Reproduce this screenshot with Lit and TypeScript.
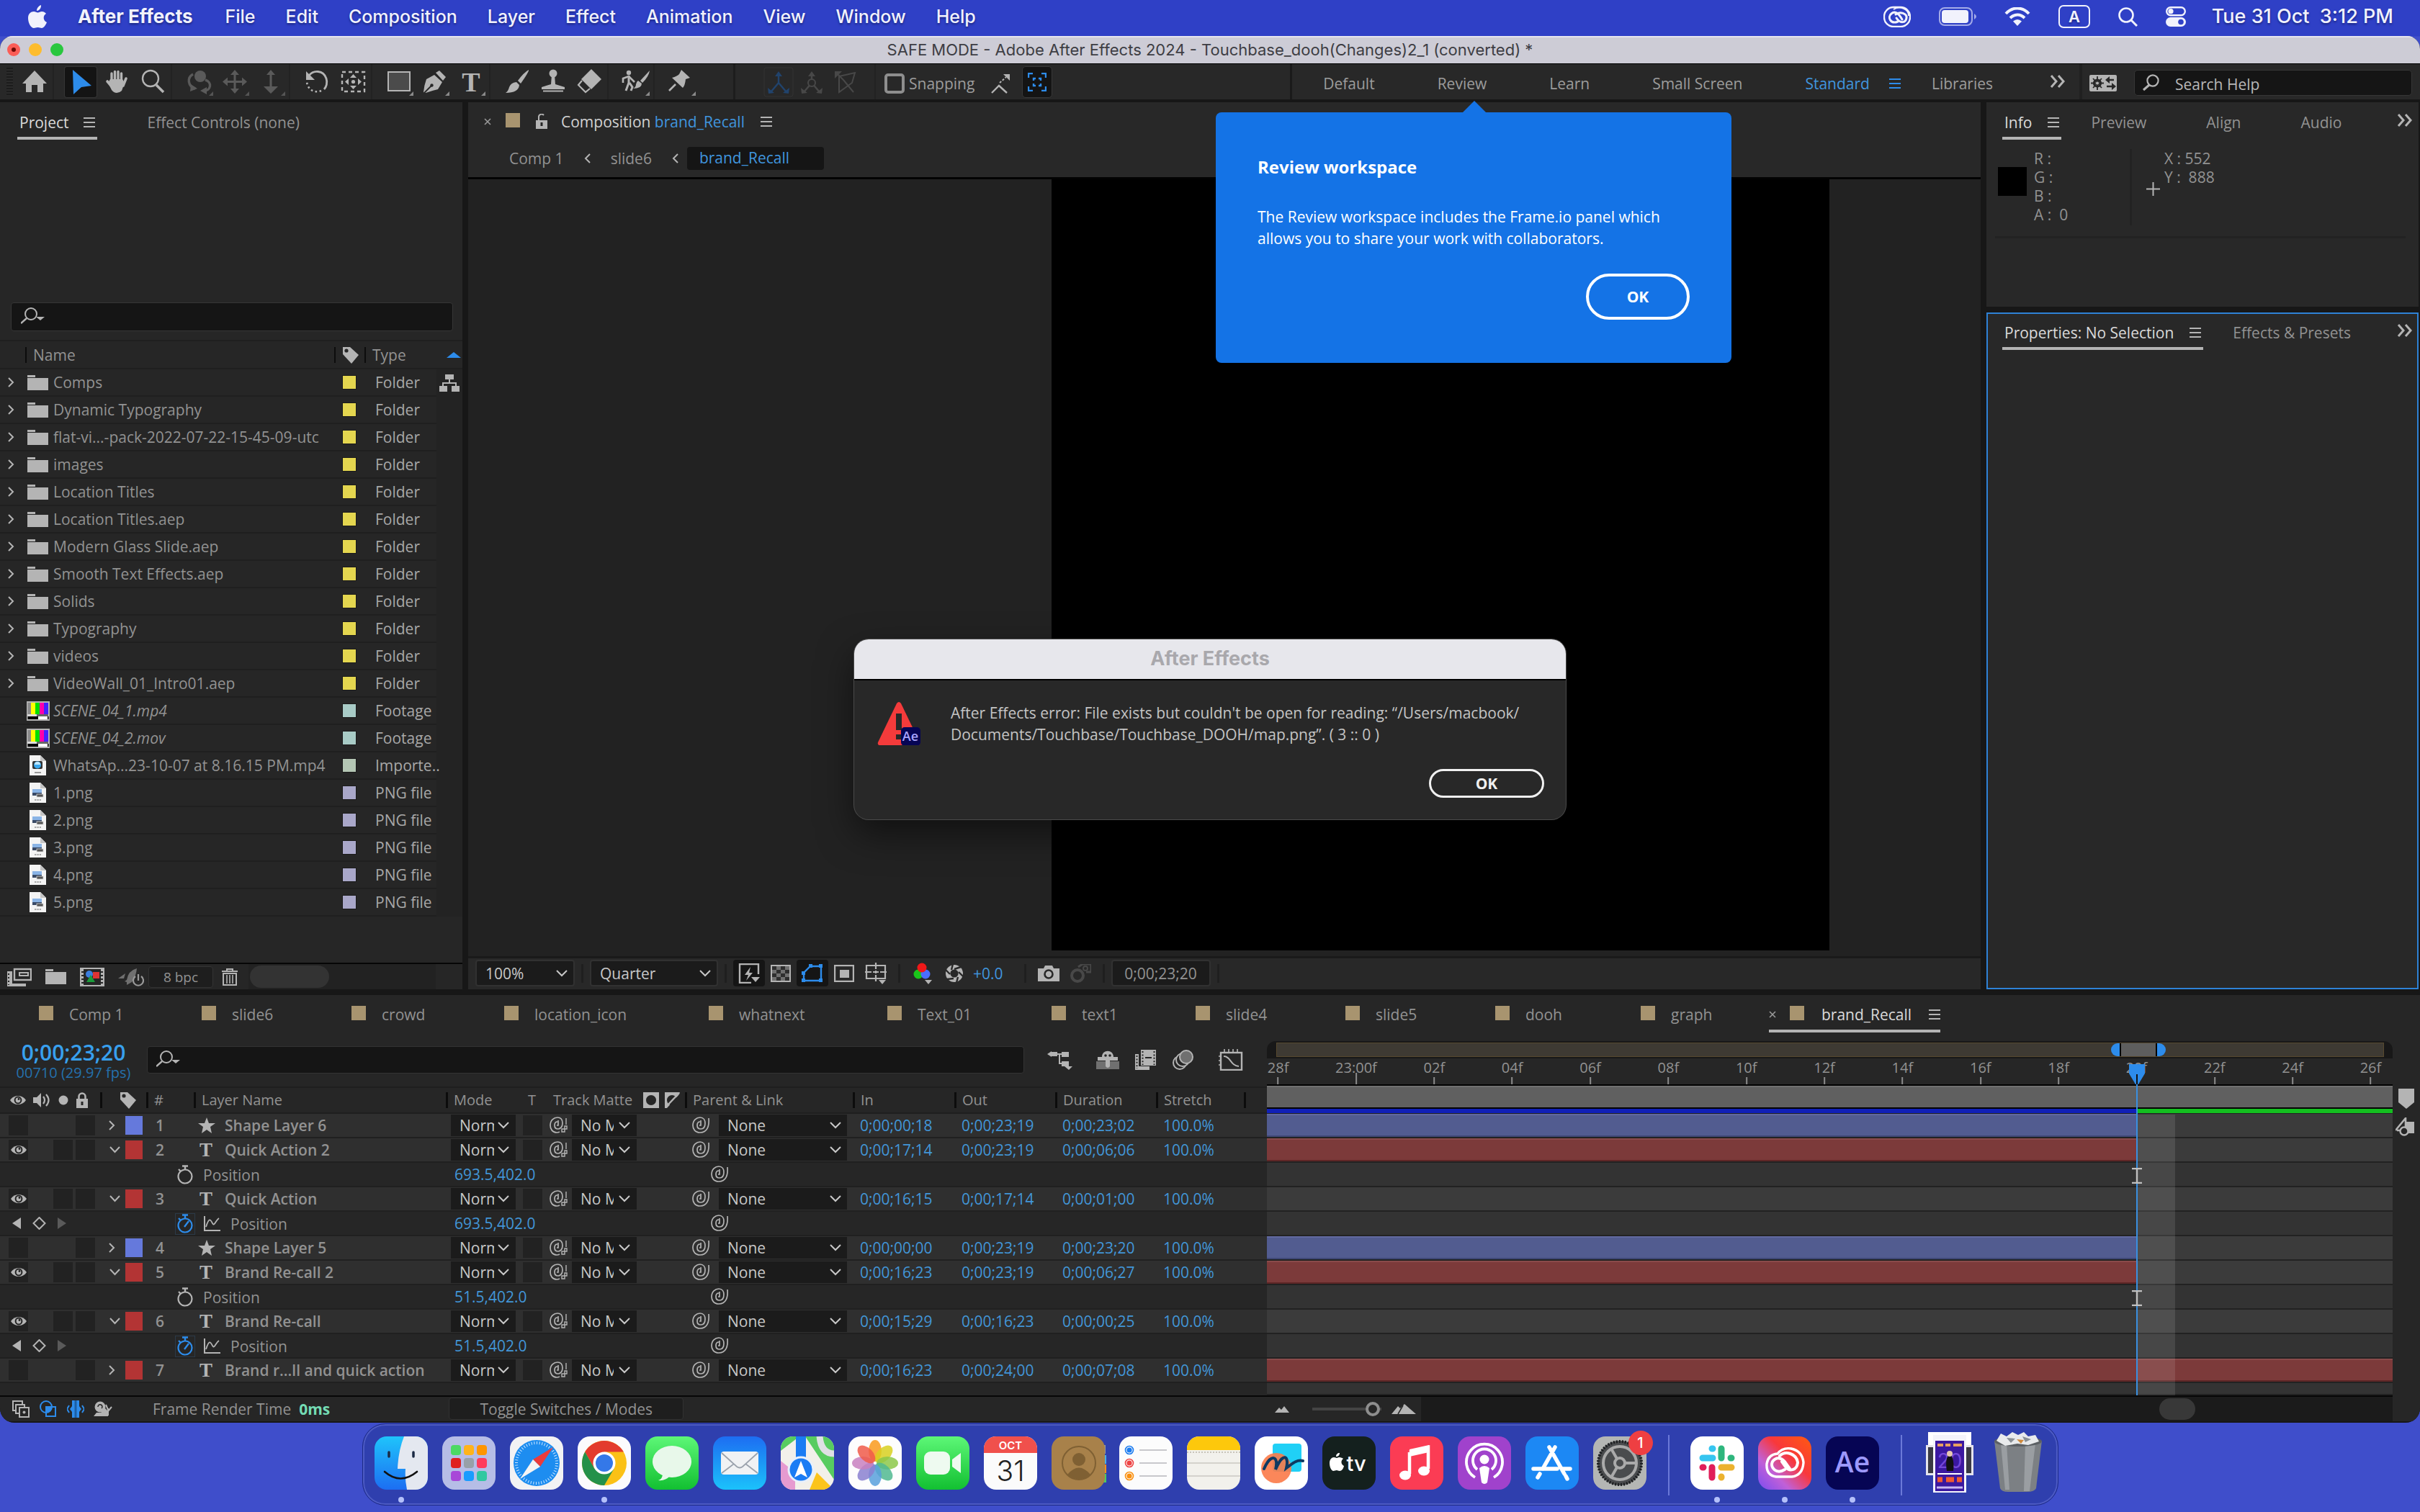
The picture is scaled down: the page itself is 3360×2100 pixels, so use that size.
import { LitElement, html, svg, css, nothing, TemplateResult } from "lit";
import { customElement } from "lit/decorators.js";
import { classMap } from "lit/directives/class-map.js";
import { styleMap } from "lit/directives/style-map.js";

type Art = unknown;

/** Wraps vector content in a sized svg element. */
const pic = (w: number, h: number, art: Art) =>
  html`<svg class="pic" width=${w} height=${h} viewBox=${`0 0 ${w} ${h}`} fill="none" aria-hidden="true">${art}</svg>`;

const G = "#b4b4b4";
const BLUE = "#2d8ceb";

const chevDown = pic(16, 10, svg`<path d="M1 1 8 8 15 1" stroke="#c8c8c8" stroke-width="2"/>`);
const chevRight = (c = "#b4b4b4") => pic(10, 14, svg`<path d="M2 1 8 7 2 13" stroke=${c} stroke-width="2"/>`);
const burger = (c = G) => pic(16, 16, svg`<path d="M0 2H16M0 8H16M0 14H16" stroke=${c} stroke-width="2"/>`);
const raquo = pic(22, 18, svg`<path d="M2 1 9 9 2 17M12 1 19 9 12 17" stroke="#b4b4b4" stroke-width="3"/>`);
const cross = pic(10, 10, svg`<path d="M1 1 9 9M9 1 1 9" stroke="#9a9a9a" stroke-width="1.6"/>`);
const lens = pic(34, 26, svg`<circle cx="14" cy="9" r="8" stroke=${G} stroke-width="2"/><path d="M8 15 0 22" stroke=${G} stroke-width="2.4"/><path d="M21 13H33L27 18Z" fill=${G}/>`);
const tag = pic(26, 26, svg`<path d="M3 2H13L25 13 15 25 3 12Z" fill=${G}/><circle cx="8" cy="7" r="2.6" fill="#262626"/>`);
const folder = pic(29, 21, svg`<path d="M0 3V0H11V3ZM0 4H29V21H0Z" fill=${G}/>`);
const corner = svg`<path d="M45 37V43H39Z" fill="#8a8a8a"/>`;
const dimCorner = svg`<path d="M45 37V43H39Z" fill="#555"/>`;
const whip = pic(26, 26, svg`<path d="M24 3C25 14 22 23 12 23 5 23 2 18 2 13 2 6 7 2 12 2 17 2 19 6 19 10 19 15 17 18 13 18 9 18 8 16 8 13 8 10 9 8 12 8M13 6V13H11" stroke=${G} stroke-width="1.700"/>`);
const matteWhip = pic(26, 26, svg`<path d="M15 22C13 23 12 23 11 23 5 23 2 18 2 13 2 6 7 2 12 2 17 2 19 5 19 10 19 15 16 18 13 18 9 18 8 16 8 13 8 10 9 8 12 8M13 6V13H11" stroke=${G} stroke-width="1.700"/><path d="M24 3V12M18 18h4v4h-4zM22 14h3v4h-3z" stroke=${G} stroke-width="1.400"/>`);
const eye = pic(24, 16, svg`<path d="M1 8C6 0 18 0 23 8 18 16 6 16 1 8Z" fill=${G}/><circle cx="12" cy="8" r="5.4" fill="#222"/><circle cx="12" cy="8" r="3.4" fill=${G}/><circle cx="13" cy="6.5" r="1.4" fill="#222"/>`);
const lockShut = pic(20, 22, svg`<path d="M2 9H18V22H2Z" fill=${G}/><path d="M5.500 10V6a4.500 4.500 0 0 1 9 0V10" stroke=${G} stroke-width="2.6"/><path d="M10 13v5" stroke="#262626" stroke-width="3"/>`);
const lockOpen = pic(18, 22, svg`<path d="M1 9H17V21H1Z" fill=${G}/><path d="M5 9V5a4 4 0 0 1 7-3" stroke=${G} stroke-width="2"/><path d="M9 12v5" stroke="#262626" stroke-width="3"/>`);
const star = pic(24, 22, svg`<path d="M12 0 15 8 24 8 17 13 19 22 12 17 5 22 7 13 0 8 9 8Z" fill=${G}/>`);
const stopwatch = (on: boolean) => {
  const c = on ? BLUE : G;
  return pic(26, 28, svg`<circle cx="13" cy="16" r="9.500" stroke=${c} stroke-width="2.200"/><path d="M9 1.500H17M13 2V6M4 6 7 9" stroke=${c} stroke-width="2.400"/>${on ? svg`<path d="M12 18 18 10" stroke=${c} stroke-width="2.400"/>` : nothing}`);
};
const graphIcon = pic(24, 22, svg`<path d="M2 0V20H24" stroke=${G} stroke-width="2"/><path d="M4 15C8 2 10 4 13 10 16 15 17 6 22 3" stroke=${G} stroke-width="1.800"/>`);

/* ---------- Toolbar art: every tool is drawn in a 50 x 48 cell ---------- */
const tool = {
  home: svg`<path d="M25 8 42 26H37V38H29V28H21V38H13V26H8Z" fill=${G}/>`,
  arrow: svg`<path d="M14 7 40 29 26 31 15 41Z" fill=${BLUE}/>`,
  hand: svg`<path d="M18 22V12M22.500 20V9.500M27 20V9.500M31.500 22V12" stroke=${G} stroke-width="3.400" stroke-linecap="round"/><path d="M38 19 34 29M12 23 18 30" stroke=${G} stroke-width="3.600" stroke-linecap="round"/><path d="M16 20H33L36 25 32 36Q29 39 25 39 21 39 18 35L13 25Z" fill=${G}/>`,
  zoom: svg`<circle cx="22" cy="19" r="11" stroke=${G} stroke-width="2.400"/><path d="M30 28 40 38" stroke=${G} stroke-width="3.600"/>`,
  orbit: svg`<circle cx="27" cy="16" r="8" fill="#5a5a5a"/><path d="M17 13C8 18 10 30 20 33M34 21C44 24 42 36 32 36" stroke="#5a5a5a" stroke-width="3.400"/><path d="M14 27 23 33 13 37ZM36 31 27 36 36 41Z" fill="#5a5a5a"/>${dimCorner}`,
  pan: svg`<path d="M25 12V35M12 23.500H38" stroke="#5a5a5a" stroke-width="3"/><path d="M25 7 31 14H19ZM25 40 31 33H19ZM8 23.500 15 17.500V29.500ZM42 23.500 35 17.500V29.500Z" fill="#5a5a5a"/>${dimCorner}`,
  dolly: svg`<path d="M25 12V32" stroke="#5a5a5a" stroke-width="3"/><path d="M25 7 31 14H19ZM25 40 35 30H15Z" fill="#5a5a5a"/>${dimCorner}`,
  rotate: svg`<path d="M14 15C20 7 34 7 38 19 40 25 38 31 35 34" stroke=${G} stroke-width="2.800"/><path d="M10 9V21H22Z" fill=${G}/><path d="M31 36C24 39 13 37 11 24" stroke=${G} stroke-width="2.600" stroke-dasharray="2.600 3.400"/>`,
  anchor: svg`<rect x="10" y="10" width="31" height="27" stroke=${G} stroke-width="2.400" stroke-dasharray="5 4"/><path d="M25.500 13 30 18H21ZM25.500 34 30 29H21ZM14 23.500 19 19V28ZM37 23.500 32 19V28Z" fill=${G}/><circle cx="25.500" cy="23.500" r="2.600" fill=${G}/>`,
  rect: svg`<rect x="10" y="10" width="30" height="26" fill="#4b4b4b" stroke=${G} stroke-width="2"/>${corner}`,
  pen: svg`<path d="M31 8 40 17 36 22 26 11Z" fill=${G}/><path d="M24 14 35 24 29 34Q24 35 12 39L9 38Q10 28 13 20Z" fill=${G}/><path d="M10 39 20 29" stroke="#282828" stroke-width="1.800"/><circle cx="20.500" cy="28.500" r="2.200" fill="#282828"/>${corner}`,
  type: svg`<text x="25" y="37" text-anchor="middle" class="ttool">T</text>${corner}`,
  brush: svg`<path d="M41 7Q42 9 30 26L26 22Q34 11 41 7Z" fill=${G}/><path d="M24 24 28 28Q27 39 9 39 13 36 14 31 16 25 24 24Z" fill=${G}/>`,
  stamp: svg`<circle cx="25" cy="12" r="5.500" fill=${G}/><path d="M23 14H27L28 27 41 31V34H9V31L22 27ZM11 35.500H39V37.500H11Z" fill=${G}/>`,
  eraser: svg`<path d="M28 6 42 20 28 34 14 20Z" fill=${G}/><path d="M15 22 10 28 20 38 26 33" stroke=${G} stroke-width="2.200"/>`,
  roto: svg`<circle cx="16" cy="11" r="3.200" fill=${G}/><path d="M16 15V25L12 36M17 25 21 31 19 36" stroke=${G} stroke-width="3"/><path d="M8 25V19L16 16 24 24" stroke=${G} stroke-width="2.600"/><path d="M45 8 32 22 35 25Q44 16 45 8Z" fill=${G}/><path d="M29 22 34 26Q34 33 22 33 26 31 26 27 27 23 29 22Z" fill=${G}/>${corner}`,
  pin: svg`<path d="M25 7 37 18 31 20Q30 29 27 32L12 18Q19 16 22 13Z" fill=${G}/><path d="M17 27 8 36" stroke=${G} stroke-width="2.600"/>${corner}`,
};

const axis = (c: string) => svg`<path d="M22 12V24L11 37M22 24 33 37" stroke=${c} stroke-width="2.400"/><path d="M22 8 27 15H17ZM7 31 8 39 16 38ZM37 31 36 39 28 38Z" fill=${c}/>`;

interface FileRow { name: string; kind: "folder" | "bars" | "mp4" | "png"; color: string; type: string }
const F = (name: string): FileRow => ({ name, kind: "folder", color: "#e4d64f", type: "Folder" });
const P = (name: string): FileRow => ({ name, kind: "png", color: "#a9a7c9", type: "PNG file" });
const FILES: FileRow[] = [
  F("Comps"), F("Dynamic Typography"), F("flat-vi...-pack-2022-07-22-15-45-09-utc"), F("images"),
  F("Location Titles"), F("Location Titles.aep"), F("Modern Glass Slide.aep"), F("Smooth Text Effects.aep"),
  F("Solids"), F("Typography"), F("videos"), F("VideoWall_01_Intro01.aep"),
  { name: "SCENE_04_1.mp4", kind: "bars", color: "#a8cbc6", type: "Footage" },
  { name: "SCENE_04_2.mov", kind: "bars", color: "#a8cbc6", type: "Footage" },
  { name: "WhatsAp...23-10-07 at 8.16.15 PM.mp4", kind: "mp4", color: "#b4c6b4", type: "Importe.." },
  P("1.png"), P("2.png"), P("3.png"), P("4.png"), P("5.png"),
];

const fileArt = (k: FileRow["kind"]): TemplateResult => {
  if (k === "folder") return folder;
  if (k === "bars")
    return pic(32, 27, svg`<rect width="32" height="27" fill="#b4b4b4"/><rect x="1.500" y="2" width="5" height="16" fill="#8a8a8a"/><rect x="6" y="2" width="6" height="16" fill="#ff0"/><rect x="12" y="2" width="6" height="16" fill="#0d0"/><rect x="18" y="2" width="6" height="16" fill="#f0a"/><rect x="24" y="2" width="6" height="16" fill="#42f"/><rect x="1.500" y="18" width="29" height="3" fill="#ddd"/><rect x="14" y="18" width="16" height="3" fill="#666"/><rect x="1.500" y="21" width="29" height="4" fill="#000"/><rect x="16" y="21" width="13" height="4" fill="#fff"/>`);
  return pic(23, 28, svg`<path d="M0 0H15L23 8V28H0Z" fill="#f4f4f4"/><path d="M15 0V8H23Z" fill="#c4c4c4"/>${
    k === "mp4"
      ? svg`<rect x="4" y="8" width="14" height="11" rx="2" fill="#333"/><circle cx="11" cy="13.500" r="5" fill="#3aa8ee"/><path d="M7 13a4 4 0 0 1 8 0" fill="#bfe6fb"/><path d="M7 24H16" stroke="#999" stroke-width="2"/>`
      : svg`<rect x="4" y="9" width="13" height="9" fill="#8ab4e6"/><rect x="4" y="14" width="13" height="4" fill="#3a4a66"/><rect x="10" y="16" width="9" height="4" fill="#555" stroke="#ddd" stroke-width=".8"/><path d="M7 24H16" stroke="#aaa" stroke-width="2" stroke-dasharray="2.400 1"/>`
  }`);
};
const FILE_COLS = [35, 429, 42, 100, 36];

interface Layer {
  n: number; name: string; shape?: boolean; on: boolean; open: boolean;
  io: [string, string, string]; end: number;
  prop?: { value: string; keyed: boolean };
}
/* `end` is the last visible frame of the bar inside the zoomed range, 0 when out of range. */
const LAYERS: Layer[] = [
  { n: 1, name: "Shape Layer 6", shape: true, on: false, open: false, io: ["0;00;00;18", "0;00;23;19", "0;00;23;02"], end: 22 },
  { n: 2, name: "Quick Action 2", on: true, open: true, io: ["0;00;17;14", "0;00;23;19", "0;00;06;06"], end: 22, prop: { value: "693.5,402.0", keyed: false } },
  { n: 3, name: "Quick Action", on: true, open: true, io: ["0;00;16;15", "0;00;17;14", "0;00;01;00"], end: 0, prop: { value: "693.5,402.0", keyed: true } },
  { n: 4, name: "Shape Layer 5", shape: true, on: false, open: false, io: ["0;00;00;00", "0;00;23;19", "0;00;23;20"], end: 22 },
  { n: 5, name: "Brand Re-call 2", on: true, open: true, io: ["0;00;16;23", "0;00;23;19", "0;00;06;27"], end: 22, prop: { value: "51.5,402.0", keyed: false } },
  { n: 6, name: "Brand Re-call", on: true, open: true, io: ["0;00;15;29", "0;00;16;23", "0;00;00;25"], end: 0, prop: { value: "51.5,402.0", keyed: true } },
  { n: 7, name: "Brand r...ll and quick action", on: false, open: false, io: ["0;00;16;23", "0;00;24;00", "0;00;07;08"], end: 30 },
];
const LAYER_COLS = [139, 64, 66, 350, 103, 35, 194, 233, 141, 140, 140, 122, 32];

const TICKS = ["28f", "23:00f", "02f", "04f", "06f", "08f", "10f", "12f", "14f", "16f", "18f", "20f", "22f", "24f", "26f"];
const at = (frame: number) => `${Math.min(100, 1 + frame * 3.466)}%`;

const COMPS: string[] = ["Comp 1", "slide6", "crowd", "location_icon", "whatnext", "Text_01", "text1", "slide4", "slide5", "dooh", "graph"];

const base = css`
  * { box-sizing: border-box; }
  button, input, select { font: inherit; color: inherit; background: none; border: 0; margin: 0; padding: 0; border-radius: 0; outline: 0; }
  button { display: inline-flex; align-items: center; cursor: default; }
  select { appearance: none; }
  a { color: inherit; text-decoration: none; }
  .pic { display: block; flex: none; }
  .pick { display: inline-grid; align-items: center; background: #1b1b1b; color: #c8c8c8; }
  .pick > * { grid-area: 1 / 1; min-width: 0; }
  .pick .pic { justify-self: end; margin-right: 8px; pointer-events: none; }
`;

/* ------------------------------------------------------------------ */
@customElement("mac-menubar")
class MacMenubar extends LitElement {
  static styles = [base, css`
    :host { display: flex; align-items: center; justify-content: space-between; height: 50px; padding: 0 37px 4px 38px; color: #f1f2fc; font: 500 25px/46px Inter, "Liberation Sans", sans-serif; text-shadow: 0 2px 3px #1a2580; }
    nav, .status { display: flex; align-items: center; gap: 42px; }
    .app { font-weight: 700; font-size: 26px; margin-right: 3px; }
    .status { gap: 36px; }
    .clock { white-space: pre; font-size: 27px; }
    .stat { display: flex; align-items: center; gap: 39px; }
    .source text { font: 600 22px Inter, sans-serif; }
  `];
  render() {
    return html`<nav>
        ${pic(28, 34, svg`<path d="M19 2C19 6 16 9 13 9 13 5 16 2 19 1ZM20 10C23 10 25 11.500 26 13 21 16 22 23 27 25 25 30 22 33 20 33 18 33 17 32 14.500 32 12 32 11 33 9 33 5 33 1 26 1 19 1 13 5 10 9 10 11 10 13 11.500 14.500 11.500 16 11.500 18 10 20 10Z" fill="#f1f2fc"/>`)}
        <a href="#" class="app">After Effects</a>
        ${["File", "Edit", "Composition", "Layer", "Effect", "Animation", "View", "Window", "Help"].map((t) => html`<a href="#">${t}</a>`)}
      </nav>
      <div class="status">
        <div class="stat">
          ${pic(38, 30, svg`<rect x="1" y="2" width="36" height="27" rx="13" stroke="#f1f2fc" stroke-width="2.400"/><path d="M14 5A13 11 0 0 1 35 14" stroke="#f1f2fc" stroke-width="2"/><path d="M20 22C10 26 5 16 11 11 17 6 22 12 26 19M17 12C23 7 33 11 32 17 31 24 23 25 18 17" stroke="#f1f2fc" stroke-width="3" stroke-linecap="round"/>`)}
          ${pic(52, 26, svg`<rect x="1" y="1" width="45" height="24" rx="7" stroke="#a4abe8" stroke-width="2"/><rect x="4" y="4" width="37" height="18" rx="4" fill="#f1f2fc"/><path d="M49 9V17Q52 15 52 13 52 11 49 9Z" fill="#a4abe8"/>`)}
          ${pic(36, 26, svg`<path d="M2 9C11-1 25-1 34 9M8 15C14 9 22 9 28 15" stroke="#f1f2fc" stroke-width="4"/><path d="M12 19.500Q18 14.500 24 19.500L18 26Z" fill="#f1f2fc"/>`)}
          <span class="source">${pic(44, 32, svg`<rect x="1" y="1" width="42" height="30" rx="6" stroke="#f1f2fc" stroke-width="2"/><text x="22" y="24" text-anchor="middle" fill="#f1f2fc">A</text>`)}</span>
          ${pic(27, 27, svg`<circle cx="11" cy="11" r="9.500" stroke="#f1f2fc" stroke-width="2.600"/><path d="M18 18 26 26" stroke="#f1f2fc" stroke-width="3"/>`)}
          ${pic(28, 28, svg`<rect x="1.200" y="1.200" width="25.600" height="11" rx="5.500" stroke="#f1f2fc" stroke-width="2.400"/><circle cx="7" cy="6.700" r="3.600" fill="#f1f2fc"/><rect y="15" width="28" height="13" rx="6.500" fill="#f1f2fc"/><circle cx="21" cy="21.500" r="3.800" fill="#3142c8"/>`)}
        </div>
        <time class="clock">Tue 31 Oct  3:12 PM</time>
      </div>`;
  }
}

/* ------------------------------------------------------------------ */
@customElement("ae-toolbar")
class AeToolbar extends LitElement {
  static styles = [base, css`
    :host { display: flex; align-items: stretch; height: 49px; background: #282828; color: #9c9c9c; }
    .grip { width: 9px; margin: 5px 5px 5px 9px; background: repeating-linear-gradient(#1c1c1c 0 2px, #2b2b2b 2px 4px); }
    .set { display: flex; align-items: center; }
    .set + .set { border-left: 2px solid #222; padding-left: 12px; }
    .cell { width: 50px; height: 48px; justify-content: center; }
    .cell.on { background: #141414; box-shadow: inset 0 0 0 2px #282828, inset 0 0 0 3px #353535; border-radius: 6px; }
    .ttool { font: 700 38px "Liberation Serif", serif; fill: #b4b4b4; }
    .set.axes { margin-left: 47px; border-left: 3px solid #1d1d1d; padding-left: 38px; }
    .axes .cell { width: 44px; margin-right: 2px; }
    .snap { gap: 6px; margin-left: 17px; }
    .snap label { padding-top: 5px; line-height: 32px; }
    input[type="checkbox"] { appearance: none; width: 28px; height: 28px; border: 4px solid #8e8e8e; border-radius: 5px; margin-top: 4px; }
    .fit { width: 42px; height: 44px; background: #141414; border: 1px solid #383838; border-radius: 5px; justify-content: center; margin-left: 8px; }
    .spaces { display: flex; align-items: center; padding-top: 5px; border-left: 3px solid #1a1a1a; padding-left: 43px; margin-left: auto; gap: 87px; }
    .spaces .now { color: #4095df; display: flex; align-items: center; gap: 27px; margin-right: -44px; }
    .spaces .more { margin: -6px 0 0 -8px; }
    .help { display: flex; align-items: center; gap: 24px; border-left: 4px solid #202020; padding: 3px 11px 0 10px; margin-left: 19px; }
    .find { display: flex; align-items: center; gap: 20px; width: 386px; height: 36px; padding: 0 10px; background: #151515; border: 1px solid #363636; border-radius: 5px; }
    .find input { width: 100%; padding-top: 4px; color: #b4b4b4; }
    .find input::placeholder { color: #b8b8b8; opacity: 1; }
  `];
  private cells(names: (keyof typeof tool)[], on = "") {
    return html`<div class="set">${names.map((k) => html`<button class=${classMap({ cell: true, on: k === on })} aria-label=${k}>${pic(50, 48, tool[k])}</button>`)}</div>`;
  }
  render() {
    return html`<div class="grip"></div>
      ${this.cells(["home"])}${this.cells(["arrow", "hand", "zoom"], "arrow")}${this.cells(["orbit", "pan", "dolly"])}
      ${this.cells(["rotate", "anchor"])}${this.cells(["rect", "pen", "type"])}${this.cells(["brush", "stamp", "eraser"])}
      ${this.cells(["roto"])}${this.cells(["pin"])}
      <div class="set axes">
        <button class="cell" aria-label="local axis">${pic(44, 46, svg`<rect x="2" y="3" width="40" height="40" rx="3" stroke="#333"/>${axis("#21436c")}`)}</button>
        <button class="cell" aria-label="world axis">${pic(44, 46, svg`${axis("#484848")}<circle cx="22" cy="24" r="5" stroke="#484848" stroke-width="2" fill="#282828"/>`)}</button>
        <button class="cell" aria-label="view axis">${pic(44, 46, svg`<path d="M14 15V37L32 24 36 10ZM20 20 34 37M12 12 20 20" stroke="#484848" stroke-width="2"/><path d="M8 8H18L8 18Z" fill="#484848"/>`)}</button>
      </div>
      <div class="set snap">
        <input type="checkbox" id="snap" /><label for="snap">Snapping</label>
        <button aria-label="snap edges">${pic(46, 40, svg`<path d="M18 35 28 25 39 35" stroke="#b4b4b4" stroke-width="2.400"/><path d="M29 21 38 13" stroke="#b4b4b4" stroke-width="2" stroke-dasharray="3 2"/><path d="M34 9H43V18Z" fill="#b4b4b4"/>`)}</button>
        <button class="fit" aria-label="snap bounds">${pic(26, 26, svg`<path d="M1 7V1H7M19 1H25V7M25 19V25H19M7 25H1V19M8 11V8H11M15 8H18V11M18 15V18H15M11 18H8V15" stroke="#2d8ceb" stroke-width="2.400"/>`)}</button>
      </div>
      <nav class="spaces">
        <a href="#">Default</a><a href="#">Review</a><a href="#">Learn</a><a href="#">Small Screen</a>
        <a href="#" class="now">Standard ${burger(BLUE)}</a><a href="#">Libraries</a><button class="more" aria-label="more">${raquo}</button>
      </nav>
      <div class="help">
        ${pic(38, 23, svg`<rect width="38" height="23" rx="2" fill="#b4b4b4"/><circle cx="11" cy="11.500" r="4.600" stroke="#282828" stroke-width="3"/><path d="M11 2V21M2 11.500H20M5 5 17 18M17 5 5 18" stroke="#282828" stroke-width="1.800"/><circle cx="11" cy="11.500" r="2" fill="#b4b4b4"/><path d="M24 7H34M24 16H34" stroke="#282828" stroke-width="2.600"/><path d="M28 2V12L22 7ZM31 11V21L37 16Z" fill="#282828"/>`)}
        <label class="find">${pic(26, 24, svg`<circle cx="15" cy="9" r="7.600" stroke="#b4b4b4" stroke-width="2.200"/><path d="M10 15 2 22" stroke="#b4b4b4" stroke-width="3"/>`)}<input placeholder="Search Help" aria-label="Search Help" /></label>
      </div>`;
  }
}

/* ------------------------------------------------------------------ */
const tabsCss = css`
  .tabs { display: flex; align-items: flex-start; height: 52px; white-space: nowrap; }
  .tab { display: flex; align-items: center; gap: 22px; height: 52px; padding: 7px 3px 4px; line-height: 32px; color: #929292; }
  .tab.on { color: #dadada; border-bottom: 4px solid #b4b4b4; padding-bottom: 0; }
`;

@customElement("ae-project")
class AeProject extends LitElement {
  static styles = [base, tabsCss, css`
    :host { display: flex; flex-direction: column; background: #262626; color: #929292; }
    .tabs { padding-left: 24px; gap: 67px; margin-bottom: 226px; }
    .tabs .tab.on { gap: 20px; }
    .find { display: flex; align-items: center; height: 40px; margin: 0 13px 12px 15px; padding: 0 13px; background: #151515; border: 1px solid #363636; border-radius: 4px; }
    .find input { flex: 1; }
    table { table-layout: fixed; border-collapse: separate; border-spacing: 0; width: 642px; text-align: left; }
    td, th { padding: 0; font-weight: 400; height: 38px; line-height: 36px; border-bottom: 2px solid #1f1f1f; white-space: nowrap; }
    th { height: 41px; border-top: 2px solid #1f1f1f; background: linear-gradient(#0c0c0c, #0c0c0c) left 0 center / 2px 22px no-repeat; padding-left: 11px; }
    th:first-child { background: none; }
    th .pic { margin-left: -2px; }
    td:last-child { background: #232323; border-bottom: 0; }
    .type { color: #a8a8a8; padding-left: 15px; }
    .chev { padding-left: 10px; }
    .name { display: flex; align-items: center; gap: 9px; height: 36px; }
    .icon { width: 33px; display: flex; justify-content: center; margin-left: 1px; }
    .name .icon { margin-right: -4px; }
    .ital { font-style: italic; }
    .chip { display: block; width: 20px; height: 20px; border: 1px solid #1a1a1a; margin-left: 11px; }
    .flow { padding-left: 4px; }
    th.tri { padding-left: 16px; background: none; }
    .rest { flex: 1; margin-right: 36px; }
    footer { display: flex; align-items: center; height: 37px; border-top: 2px solid #060606; padding-left: 10px; gap: 19px; }
    .bpc { width: 90px; height: 30px; justify-content: center; background: #1e1e1e; border: 1px solid #333; border-radius: 4px; font-size: 19px; margin: 0 -7px 0 -13px; }
    .scroll { width: 260px; height: 35px; background: #222; padding: 2px; margin-left: -4px; }
    .thumb { width: 110px; height: 31px; border-radius: 16px; background: #333; }
  `];
  render() {
    return html`<div class="tabs">
        <button class="tab on">Project ${burger()}</button><button class="tab">Effect Controls (none)</button>
      </div>
      <label class="find">${lens}<input aria-label="Search project" /></label>
      <table>
        <colgroup>${FILE_COLS.map((w) => html`<col style=${styleMap({ width: `${w}px` })} />`)}</colgroup>
        <thead><tr><th></th><th>Name</th><th>${tag}</th><th>Type</th>
          <th class="tri">${pic(20, 8, svg`<path d="M0 8 10 0 20 8Z" fill=${BLUE}/>`)}</th></tr></thead>
        <tbody>${FILES.map((f, i) => html`<tr>
          <td class="chev">${f.kind === "folder" ? chevRight() : nothing}</td>
          <td><div class="name"><span class="icon">${fileArt(f.kind)}</span><span class=${f.kind === "bars" ? "ital" : ""}>${f.name}</span></div></td>
          <td><span class="chip" style=${styleMap({ background: f.color })}></span></td>
          <td class="type">${f.type}</td>
          <td class="flow">${i === 0 ? pic(28, 24, svg`<path d="M8 0H20V7H8ZM0 16H11V24H0ZM17 16H28V24H17Z" fill=${G}/><path d="M14 7V12M5 16V12H23V16" stroke=${G} stroke-width="2"/>`) : nothing}</td>
        </tr>`)}</tbody>
      </table>
      <div class="rest"></div>
      <footer>
        ${pic(34, 26, svg`<path d="M0 5H7V22H26V26H0Z" fill=${G}/><path d="M2 8V24" stroke="#262626" stroke-width="2" stroke-dasharray="2 3"/><rect x="10" y="2" width="23" height="15" stroke=${G} stroke-width="2.400"/><rect x="17" y="7" width="12" height="4" stroke=${G} stroke-width="2"/>`)}
        ${folder}
        ${pic(34, 26, svg`<rect x="1" y="1" width="32" height="24" fill="#262626" stroke=${G} stroke-width="2"/><path d="M3 2V24M31 2V24" stroke=${G} stroke-width="4" stroke-dasharray="3 2"/><circle cx="13" cy="9" r="5" fill="#3b7ddd"/><path d="M18 6H27V15H18Z" fill="#d33"/><path d="M9 20 15 10 21 20Z" fill="#1a9c3a"/>`)}
        ${pic(36, 26, svg`<path d="M12 17Q14 4 26 1 25 12 19 20L12 24V20L9 19ZM0 15 10 8 8 15Z" fill="#707070"/><path d="M24 12A7 7 0 1 0 32 12M28 9V18" stroke="#9a9a9a" stroke-width="2.200"/>`)}
        <button class="bpc">8 bpc</button>
        ${pic(22, 24, svg`<path d="M0 4H22M7 4V1H15V4M2 7H20V23H2Z" stroke=${G} stroke-width="2"/><path d="M7 9V21M11 9V21M15 9V21" stroke=${G} stroke-width="1.600"/>`)}
        <div class="scroll"><div class="thumb"></div></div>
      </footer>`;
  }
}

/* ------------------------------------------------------------------ */
@customElement("ae-viewer")
class AeViewer extends LitElement {
  static styles = [base, tabsCss, css`
    :host { display: flex; flex-direction: column; background: #282828; color: #929292; }
    .head { display: flex; align-items: center; height: 52px; padding: 5px 0 3px 22px; line-height: 32px; color: #d2d2d2; }
    .head .chip { width: 20px; height: 20px; background: #a8946f; margin: 0 21px 4px 20px; }
    .head .title { margin: 0 22px 0 18px; }
    .blue { color: #4095df; }
    .crumbs { display: flex; align-items: center; height: 52px; padding: 0 0 0 57px; }
    .crumbs a { line-height: 32px; }
    .crumbs .pic { margin: 0 27px 0 28px; transform: scaleX(-1); }
    .crumbs .here { width: 190px; height: 32px; padding-left: 17px; background: #151515; border-radius: 4px; color: #4095df; margin-left: -16px; line-height: 30px; }
    .stage { flex: 1; background: #222; border-top: 3px solid #030303; border-bottom: 3px solid #1a1a1a; padding-bottom: 8px; }
    .canvas { width: 51.43%; height: 100%; margin-left: 38.57%; background: #000; }
    .bar { display: flex; align-items: center; height: 43px; padding: 0 0 2px 10px; }
    .bar .pick { height: 37px; background: #1b1b1b; border: 2px solid #313131; border-radius: 4px; }
    .pick select { padding-left: 12px; width: 100%; }
    .zoom { width: 138px; }
    .res { width: 178px; }
    .sep { width: 3px; height: 26px; background: #1f1f1f; margin: 0 9px; }
    .ic { width: 44px; height: 37px; justify-content: center; }
    .ic.dark { background: #151515; border-radius: 4px; }
    .bar .blue { margin-left: 4px; margin-right: 20px; }
    .tc { width: 138px; height: 37px; justify-content: center; background: #1b1b1b; border: 2px solid #313131; border-radius: 4px; }
  `];
  render() {
    const crumb = chevRight();
    const s = html`<span class="sep"></span>`;
    return html`<div class="head">${cross}<span class="chip"></span>${lockOpen}<span class="title">Composition <span class="blue">brand_Recall</span></span>${burger()}</div>
      <nav class="crumbs"><a href="#">Comp 1</a>${crumb}<a href="#">slide6</a>${crumb}<a href="#" class="here">brand_Recall</a></nav>
      <div class="stage"><div class="canvas"></div></div>
      <div class="bar">
        <label class="pick zoom"><select aria-label="Magnification"><option>100%</option></select>${chevDown}</label>${s}
        <label class="pick res"><select aria-label="Resolution"><option>Quarter</option></select>${chevDown}</label>${s}
        <button class="ic dark" aria-label="fast previews">${pic(30, 28, svg`<path d="M28 15V1H2V27H18" stroke=${G} stroke-width="2.400"/><path d="M17 5 9 16H14L11 24 20 13H15Z" fill=${G}/><path d="M18 19H30L24 26Z" fill=${G}/>`)}</button>
        <button class="ic" aria-label="transparency grid">${pic(28, 24, svg`<rect x="1" y="1" width="26" height="22" stroke=${G} stroke-width="2" fill="#707070"/><path d="M2 2h6v5H2zM14 2h6v5h-6zM8 7h6v5H8zM20 7h6v5h-6zM2 12h6v5H2zM14 12h6v5h-6zM8 17h6v5H8zM20 17h6v5h-6z" fill="#2e2e2e"/>`)}</button>
        <button class="ic dark" aria-label="mask visibility">${pic(30, 26, svg`<path d="M3 23V12L12 3H27V23Z" stroke=${BLUE} stroke-width="2.400"/><path d="M0 20h5v5H0zM24 20h5v5h-5zM24 0h5v5h-5zM10 0h5v5h-5zM0 10h5v5H0z" fill=${BLUE}/>`)}</button>
        <button class="ic" aria-label="region of interest">${pic(28, 24, svg`<rect x="1" y="1" width="26" height="22" stroke=${G} stroke-width="2.400"/><rect x="8" y="7" width="13" height="11" fill=${G}/>`)}</button>
        <button class="ic" aria-label="guides">${pic(30, 30, svg`<path d="M2 4H28V22H2ZM15 0V9M15 17V26M0 13H9M21 13H30M11 13H19M15 11V15" stroke=${G} stroke-width="2.200"/><path d="M19 24H29L24 30Z" fill=${G}/>`)}</button>${s}
        <button class="ic" aria-label="channels">${pic(26, 30, svg`<circle cx="7" cy="16" r="6.500" fill="#1ac41a"/><circle cx="17" cy="16" r="6.500" fill="#4a6dff"/><circle cx="12" cy="7" r="6.500" fill="#f01818"/><path d="M16 24H26L21 30Z" fill=${G}/>`)}</button>
        <button class="ic" aria-label="exposure reset">${pic(26, 26, svg`<circle cx="13" cy="13" r="12" fill=${G}/><path d="M13 7 22 4M19 11 26 18M18 18 16 26M12 20 3 21M7 14 1 8M9 8 11 0" stroke="#282828" stroke-width="2.400"/><circle cx="13" cy="13" r="5.600" fill="#282828"/>`)}</button>
        <span class="blue">+0.0</span>${s}
        <button class="ic" aria-label="snapshot">${pic(30, 22, svg`<path d="M0 4H8L10 0H20L22 4H30V22H0Z" fill=${G}/><circle cx="15" cy="12" r="5.500" stroke="#282828" stroke-width="2.600"/>`)}</button>
        <button class="ic" aria-label="show snapshot">${pic(30, 26, svg`<circle cx="11" cy="16" r="8" stroke="#484848" stroke-width="4"/><path d="M12 4 18 0H30V11H23" stroke="#484848" stroke-width="3"/><circle cx="22" cy="6" r="3" stroke="#484848" stroke-width="2"/>`)}</button>${s}
        <button class="tc">0;00;23;20</button>${s}
      </div>`;
  }
}

/* ------------------------------------------------------------------ */
@customElement("ae-side")
class AeSide extends LitElement {
  static styles = [base, tabsCss, css`
    :host { display: flex; flex-direction: column; gap: 8px; color: #929292; }
    section { background: #282828; }
    .info { height: 284px; padding-right: 18px; }
    .tabs { padding: 0 0 0 22px; }
    .tabs .more { margin: 16px 0 0 auto; }
    .info .tabs { margin-right: -10px; }
    .info .tab + .tab { margin-left: 38px; }
    .info .tab + .tab + .tab { margin-left: 77px; }
    .vals { display: grid; grid-template-columns: 40px 146px 18px 1fr; padding: 13px 0 0 16px; column-gap: 10px; line-height: 26px; height: 134px; }
    .well { background: #000; width: 40px; height: 40px; margin-top: 25px; }
    .vals div { white-space: pre; }
    .rgb { border-right: 3px solid #222; height: 106px; margin-right: 10px; }
    .plus { margin-top: 46px; }
    .xy { margin-left: -3px; }
    hr { border: 0; height: 3px; background: #222; margin: 0 0 0 12px; }
    .props { flex: 1; border: 2px solid #2e82d6; }
    .props .tabs { padding-left: 20px; padding-right: 6px; margin-top: -2px; }
    .props .tab + .tab { margin-left: 38px; }
  `];
  render() {
    return html`<section class="info">
        <div class="tabs"><button class="tab on">Info ${burger()}</button><button class="tab">Preview</button><button class="tab">Align</button><button class="tab">Audio</button><button class="more" aria-label="more">${raquo}</button></div>
        <div class="vals"><div class="well"></div><div class="rgb">R :
G :
B :
A :  0</div><div class="plus">${pic(19, 19, svg`<path d="M9.500 0V19M0 9.500H19" stroke=${G} stroke-width="2"/>`)}</div><div class="xy">X : 552
Y :  888</div></div>
        <hr />
      </section>
      <section class="props">
        <div class="tabs"><button class="tab on">Properties: No Selection ${burger()}</button><button class="tab">Effects &amp; Presets</button><button class="more" aria-label="more">${raquo}</button></div>
      </section>`;
  }
}

/* ------------------------------------------------------------------ */
@customElement("ae-timeline")
class AeTimeline extends LitElement {
  static styles = [base, tabsCss, css`
    :host { display: block; background: #262626; color: #929292; }
    .comps { display: grid; grid-template-columns: 226px 208px 212px 284px 248px 228px 200px 208px 208px 202px 178px auto; height: 64px; padding-left: 54px; justify-content: start; }
    .comp { display: flex; align-items: center; gap: 22px; height: 52px; line-height: 32px; padding: 6px 0 4px; }
    .comp::before { content: ""; width: 20px; height: 20px; background: #a8946f; margin-bottom: 4px; }
    .comp.on { color: #dadada; border-bottom: 4px solid #b4b4b4; padding-bottom: 0; gap: 24px; }
    .comp.on::before { order: 1; }
    .comp.on .pic:first-child { margin-right: -5px; }
    .comp.on > :nth-child(n + 2) { order: 2; }
    .body { display: grid; grid-template-columns: 1759px 1fr 38px; }
    .tools { display: flex; align-items: center; height: 63px; padding-bottom: 12px; }
    .clock { width: 204px; text-align: center; padding-top: 4px; }
    .clock b { display: block; font-size: 30px; line-height: 32px; font-weight: 600; color: #38a0ee; }
    .clock span { display: block; font-size: 20px; line-height: 24px; color: #2571ad; }
    .find { display: flex; align-items: center; width: 1218px; height: 38px; padding: 0 12px; background: #151515; border: 1px solid #333; border-radius: 4px; }
    .find input { flex: 1; }
    .tools .acts { display: flex; align-items: center; margin-left: 32px; }
    .acts button + button { margin-left: 22px; }
    .acts button:nth-child(2) { margin-left: 32px; }
    .acts button:last-child { margin-left: 34px; }
    table { table-layout: fixed; border-collapse: separate; border-spacing: 0; width: 1759px; text-align: left; border-right: 1px solid #0c0c0c; }
    th { height: 38px; padding: 0 0 0 11px; font-weight: 400; font-size: 20px; border-top: 2px solid #1f1f1f; border-bottom: 2px solid #1f1f1f; background: linear-gradient(#0c0c0c, #0c0c0c) left 0 center / 3px 22px no-repeat; white-space: nowrap; }
    th.plain { background: none; }
    td { height: 34px; padding: 0; line-height: 30px; border-bottom: 2px solid #202020; white-space: nowrap; background: #2f2f2f; }
    .prop td { background: #262626; }
    .av { display: flex; align-items: center; gap: 4px; padding-left: 12px; }
    .av i, .t { display: flex; justify-content: center; align-items: center; width: 27px; height: 28px; }
    .av .dk, .t { background: #222; }
    th .av { padding-left: 2px; gap: 9px; }
    th .tg { padding-left: 14px; }
    .lab { display: flex; align-items: center; justify-content: flex-end; gap: 14px; padding-right: 5px; }
    .lab.open { gap: 7px; }
    .lab .sq { width: 24px; height: 26px; }
    .num { padding-left: 13px; font-weight: 600; }
    .nm { display: flex; align-items: center; font-weight: 600; padding-left: 6px; }
    .nm .gl { width: 37px; display: flex; }
    .nm .tt { font: 700 27px/28px "Liberation Serif", serif; color: #b4b4b4; padding-left: 2px; }
    .pick { height: 30px; }
    .pick select { padding-left: 12px; width: 100%; height: 28px; line-height: 28px; }
    .mode { width: 90px; margin-left: 7px; }
    .mode select { padding-right: 30px; }
    .mode .pic { margin-right: 9px; }
    .t { margin-left: 4px; }
    .row { display: flex; align-items: center; }
    .matte { gap: 15px; }
    .tm { gap: 4px; padding-left: 5px; }
    .tm .mode { margin-left: 2px; }
    .tm .mode select { padding-right: 32px; }
    .par { gap: 12px; padding-left: 9px; }
    .par .pick { width: 178px; }
    .num2 { color: #4296d8; padding-left: 10px; }
    .val { color: #4296d8; padding-left: 12px; }
    .pw { padding-left: 35px; }
    .kf { display: flex; align-items: center; gap: 15px; padding-left: 17px; }
    .pn { display: flex; align-items: center; gap: 12px; height: 32px; padding: 2px 0 0 41px; }
    .pn .sw { height: 28px; }
    .pn .key { outline: 1px solid #2c3a48; }
    .pn .pic + .lbl { margin-left: 2px; }
    .gap { height: 17px; }
    .foot { display: flex; align-items: center; height: 36px; border-top: 2px solid #060606; padding: 0 0 1px 17px; }
    .foot .pic { margin-right: 13px; }
    .ms { color: #74dcb4; font-weight: 700; margin-left: 11px; }
    .frt { margin-left: 43px; }
    .toggle { width: 326px; height: 31px; justify-content: center; background: #1e1e1e; border: 1px solid #313131; border-radius: 4px; margin-left: 165px; }

    .view { position: relative; display: flex; flex-direction: column; }
    .nav { height: 24px; padding: 2px 12px 2px 13px; background: #181818; border-radius: 12px 12px 0 0; }
    .span { height: 20px; background: #3e3a33; border: 1px solid #57492f; display: flex; }
    .win { width: 76px; margin-left: 75.4%; border: 0 solid #2d8ceb; border-width: 0 12px; border-radius: 9px; background: #5e5e5e; box-shadow: inset 2px 0 #000, inset -2px 0 #000; }
    .ruler { position: relative; height: 38px; border-bottom: 2px solid #030303; overflow: hidden; font-size: 20px; }
    .tick { position: absolute; bottom: 0; display: flex; flex-direction: column; align-items: center; transform: translateX(-50%); line-height: 26px; }
    .tick::after { content: ""; width: 2px; height: 10px; background: #8c8c8c; }
    .tick.major::after { height: 16px; margin-top: -6px; }
    .work { height: 32px; background: #606060; border-bottom: 2px solid #030303; border-top: 2px solid #707070; }
    .cache { display: flex; height: 7px; background: #14bf20; border-bottom: 1px solid #222; }
    .cache i { background: #1020b8; }
    .lane { display: flex; height: 34px; border-bottom: 2px solid #222; background: #3b3b3b; }
    .lane.p { background: #333; }
    .lane.tail { height: 17px; }
    .bar { border-top: 2px solid #6169a0; border-bottom: 2px solid #3f4876; background: #525c90; }
    .bar.red { background: #7c3a3a; border-top-color: #8a4a4a; border-bottom-color: #5e2626; }
    .now { position: absolute; top: 102px; bottom: 36px; width: 54px; background: rgba(255, 255, 255, 0.1); }
    .line { position: absolute; top: 56px; bottom: 36px; width: 2px; background: #3a8fe0; }
    .head { position: absolute; top: 32px; margin-left: -11px; }
    .ibeam { position: absolute; margin-left: -6px; }
    .zoomer { display: flex; align-items: center; height: 36px; border-top: 2px solid #060606; }
    .zoomer .ctl { display: flex; align-items: center; width: 214px; gap: 14px; padding-left: 11px; }
    input[type="range"] { appearance: none; width: 96px; height: 20px; background: linear-gradient(#444, #444) center / 100% 4px no-repeat; margin: 0 0 0 18px; }
    input[type="range"]::-webkit-slider-thumb { appearance: none; width: 20px; height: 20px; border-radius: 50%; border: 4px solid #8e8e8e; background: #262626; }
    .hscroll { flex: 1; height: 34px; background: #1b1b1b; padding: 2px 0; }
    .hscroll i { display: block; width: 50px; height: 30px; border-radius: 15px; background: #383838; margin-left: 76%; }
    .gut { display: flex; flex-direction: column; align-items: flex-end; padding: 66px 8px 0 0; gap: 12px; }
  `];

  private layer(l: Layer) {
    const c = l.shape ? "#6579dc" : "#b33434";
    return html`<tr>
      <td><div class="av"><i class="dk">${l.on ? eye : nothing}</i><i></i><i class=${l.on ? "dk" : ""}></i><i class="dk"></i></div></td>
      <td><div class=${l.open ? "lab open" : "lab"}>${l.open ? pic(15, 10, svg`<path d="M1 1 7.500 8 14 1" stroke=${G} stroke-width="2"/>`) : chevRight()}<span class="sq" style=${styleMap({ background: c })}></span></div></td>
      <td class="num">${l.n}</td>
      <td><div class="nm"><span class="gl">${l.shape ? star : html`<span class="tt">T</span>`}</span>${l.name}</div></td>
      <td><div class="row"><label class="pick mode"><select aria-label="Mode"><option>Normal</option></select>${chevDown}</label></div></td>
      <td><span class="t"></span></td>
      <td><div class="row tm">${matteWhip}<label class="pick mode"><select aria-label="Track matte"><option>No Matte</option></select>${chevDown}</label></div></td>
      <td><div class="row par">${whip}<label class="pick"><select aria-label="Parent"><option>None</option></select>${chevDown}</label></div></td>
      ${l.io.map((v) => html`<td class="num2">${v}</td>`)}<td class="num2">100.0%</td><td></td>
    </tr>${l.prop ? html`<tr class="prop">
      <td>${l.prop.keyed ? html`<div class="kf">${pic(13, 16, svg`<path d="M12 0V16L0 8Z" fill=${G}/>`)}${pic(19, 18, svg`<path d="M9.500 1 17.500 9 9.500 17 1.500 9Z" stroke=${G} stroke-width="2"/>`)}${pic(13, 16, svg`<path d="M1 0V16L13 8Z" fill="#5a5a5a"/>`)}</div>` : nothing}</td>
      <td></td>
      <td colspan="2"><div class="pn"><span class=${l.prop.keyed ? "sw key" : "sw"}>${stopwatch(l.prop.keyed)}</span>${l.prop.keyed ? graphIcon : nothing}<span class="lbl">Position</span></div></td>
      <td colspan="3" class="val">${l.prop.value}</td>
      <td class="pw">${whip}</td><td colspan="5"></td>
    </tr>` : nothing}`;
  }

  render() {
    const cti = at(22);
    return html`<div class="comps">
        ${COMPS.map((c) => html`<button class="comp">${c}</button>`)}
        <button class="comp on">${cross}<span>brand_Recall</span>${burger()}</button>
      </div>
      <div class="body">
        <div>
          <div class="tools">
            <div class="clock"><b>0;00;23;20</b><span>00710 (29.97 fps)</span></div>
            <label class="find">${lens}<input aria-label="Search layers" /></label>
            <div class="acts">
              <button aria-label="flowchart">${pic(36, 28, svg`<path d="M0 6 6 2V10ZM6 3H14V9H6ZM20 3H30V10H20ZM20 16H30V23H20Z" fill=${G}/><path d="M14 6H20M17 6V19H20" stroke=${G} stroke-width="2"/><path d="M24 23H35L30 28Z" fill=${G}/>`)}</button>
              <button aria-label="shy">${pic(32, 26, svg`<path d="M0 15H32V26H0Z" fill="#707070"/><path d="M8 9C8-2 24-2 24 9L30 9V14H19V22Q16 26 13 22V14H2V9Z" fill=${G}/><circle cx="13" cy="7" r="1.800" fill="#262626"/><circle cx="19" cy="7" r="1.800" fill="#262626"/>`)}</button>
              <button aria-label="frame blending">${pic(30, 28, svg`<path d="M0 6H5V23H20V28H0Z" fill=${G}/><rect x="8" width="21" height="22" fill=${G}/><path d="M10.500 2V21M26.500 2V21M2.500 8V26" stroke="#262626" stroke-width="2" stroke-dasharray="2 2.400"/><path d="M14 11H23" stroke="#262626" stroke-width="2"/>`)}</button>
              <button aria-label="motion blur">${pic(30, 28, svg`<circle cx="10" cy="18" r="9" stroke=${G} stroke-width="2"/><circle cx="14" cy="14" r="9" stroke=${G} stroke-width="2" fill="#262626"/><circle cx="19" cy="10" r="9" stroke=${G} stroke-width="2" fill="#707070"/>`)}</button>
              <button aria-label="graph editor">${pic(34, 30, svg`<rect x="3" y="5" width="29" height="24" stroke=${G} stroke-width="2.400"/><path d="M8 0V4M14 0V4M20 0V4M26 0V4M0 10H3M0 16H3M0 22H3" stroke=${G} stroke-width="1.600"/><path d="M7 10C17 10 16 23 28 24" stroke=${G} stroke-width="2"/>`)}</button>
            </div>
          </div>
          <table>
            <colgroup>${LAYER_COLS.map((w) => html`<col style=${styleMap({ width: `${w}px` })} />`)}</colgroup>
            <thead><tr>
              <th class="plain"><div class="av">${eye}${pic(26, 22, svg`<path d="M0 7H5L11 1V21L5 15H0Z" fill=${G}/><path d="M14 6Q18 11 14 16M18 3Q25 11 18 19" stroke=${G} stroke-width="2.200"/>`)}${pic(14, 14, svg`<circle cx="7" cy="7" r="6.500" fill=${G}/>`)}${lockShut}</div></th>
              <th><div class="tg">${tag}</div></th><th>#</th><th>Layer Name</th><th>Mode</th><th class="plain">T</th>
              <th class="plain"><div class="row matte">Track Matte${pic(52, 22, svg`<rect width="22" height="22" fill=${G}/><circle cx="11" cy="11" r="7" fill="#262626"/><path d="M30 0H51L49 4 33 22H30Z" fill=${G}/><circle cx="40" cy="11" r="7" fill="#262626"/><path d="M31 21 50 1" stroke=${G} stroke-width="2.400"/>`)}</div></th>
              <th>Parent &amp; Link</th><th>In</th><th>Out</th><th>Duration</th><th>Stretch</th><th></th>
            </tr></thead>
            <tbody>${LAYERS.map((l) => this.layer(l))}</tbody>
          </table>
          <div class="gap"></div>
          <div class="foot">
            ${pic(24, 24, svg`<path d="M6 14H1V1H14V5M10 18H5V6H17V9" stroke=${G} stroke-width="2"/><rect x="10" y="10" width="13" height="13" stroke=${G} stroke-width="2"/><circle cx="16.500" cy="16.500" r="2" fill=${G}/>`)}
            ${pic(26, 24, svg`<circle cx="10" cy="9" r="8" stroke=${BLUE} stroke-width="2"/><rect x="10" y="9" width="13" height="13" stroke=${BLUE} stroke-width="2"/><path d="M10 9H18Q18 17 10 17Z" fill=${BLUE}/>`)}
            ${pic(24, 24, svg`<path d="M7 0H17V8L20 12 17 16V24H7V16L4 12 7 8Z" fill=${BLUE}/><path d="M3 7 0 12 3 17M21 7 24 12 21 17" stroke=${BLUE} stroke-width="2"/><path d="M12 0V24" stroke="#1c5fa4" stroke-width="3"/>`)}
            ${pic(26, 22, svg`<circle cx="9" cy="8" r="7.500" fill=${G}/><path d="M0 21H20V14L16 10 10 16H4Z" fill=${G}/><path d="M20 20V10M25 8 20 14M17 5 20 12" stroke=${G} stroke-width="2"/><path d="M6 8a3 3 0 1 1 5 2" stroke="#262626" stroke-width="1.500"/>`)}
            <span class="frt">Frame Render Time</span><span class="ms">0ms</span>
            <button class="toggle">Toggle Switches / Modes</button>
          </div>
        </div>
        <div class="view">
          <div class="nav"><div class="span"><div class="win"></div></div></div>
          <div class="ruler">${TICKS.map((t, i) => html`<span class=${i === 1 ? "tick major" : "tick"} style=${styleMap({ left: at(i * 2) })}>${t}</span>`)}</div>
          <div class="work"></div>
          <div class="cache"><i style=${styleMap({ width: cti })}></i></div>
          ${LAYERS.map((l) => html`<div class="lane">${l.end ? html`<div class=${l.shape ? "bar" : "bar red"} style=${styleMap({ width: at(l.end) })}></div>` : nothing}</div>${l.prop ? html`<div class="lane p"></div>` : nothing}`)}
          <div class="lane p tail"></div>
          <div class="now" style=${styleMap({ left: cti })}></div>
          <div class="line" style=${styleMap({ left: cti })}></div>
          <div class="head" style=${styleMap({ left: cti })}>${pic(24, 28, svg`<path d="M1 0H23V13L14 28H10L1 13Z" fill=${BLUE}/><path d="M12 14V28" stroke="#111" stroke-width="2"/>`)}</div>
          ${[176, 346].map((y) => html`<div class="ibeam" style=${styleMap({ left: cti, top: `${y}px` })}>${pic(14, 22, svg`<path d="M0 1H14M0 21H14M7 1V21" stroke="#c0c0c0" stroke-width="2.400"/>`)}</div>`)}
          <div class="zoomer">
            <div class="ctl">${pic(20, 9, svg`<path d="M0 9 6 2 9 5 13 0 20 9Z" fill=${G}/>`)}<input type="range" value="98" aria-label="Time zoom" />${pic(34, 14, svg`<path d="M0 14 9 3 12 6 18 0 34 14Z" fill=${G}/><path d="M9 14 16 2" stroke="#262626" stroke-width="1.500"/>`)}</div>
            <div class="hscroll"><i></i></div>
          </div>
        </div>
        <div class="gut">
          ${pic(22, 28, svg`<path d="M0 0H22V19L11 28 0 19Z" fill=${G}/>`)}
          ${pic(26, 26, svg`<path d="M26 6V22H14V6Z" fill=${G}/><path d="M0 18 14 1V18M2 18H12" stroke=${G} stroke-width="2.600"/><circle cx="12" cy="19" r="5.500" fill="#262626" stroke=${G} stroke-width="2.400"/>`)}
        </div>
      </div>`;
  }
}

/* ---------- Dock ---------- */
const tile = (fill: string, art: Art) => svg`<rect width="74" height="74" rx="17" fill=${fill}/>${art}`;
const petal = (a: number, c: string) => svg`<ellipse cx="37" cy="20" rx="9" ry="15" fill=${c} opacity=".85" transform=${`rotate(${a} 37 37)`}/>`;
const pads = ["#4cd964", "#ffb31a", "#ff9500", "#e02020", "#98a0a8", "#ff3b5c", "#a848d8", "#1a9cff", "#30c8a0"];

const DOCK: { label: string; art: Art; dot?: boolean; sep?: boolean; badge?: string }[] = [
  { label: "Finder", dot: true, art: svg`<rect width="74" height="74" rx="17" fill="url(#fi)"/><path d="M41 0H57A17 17 0 0 1 74 17V57A17 17 0 0 1 57 74H45Q42 60 43 45H32Q33 20 41 0Z" fill="#e4e8f0"/><path d="M20 22V28M54 22V28" stroke="#1a2a44" stroke-width="3.500" stroke-linecap="round"/><path d="M14 49Q36 68 59 49" stroke="#111" stroke-width="2.600" stroke-linecap="round"/>` },
  { label: "Launchpad", art: tile("#b6bde6", pads.map((c, i) => svg`<rect x=${12 + (i % 3) * 18} y=${12 + Math.floor(i / 3) * 18} width="14" height="14" rx="4" fill=${c}/>`)) },
  { label: "Safari", art: tile("#f2f2f4", svg`<circle cx="37" cy="37" r="32" fill="#1d8df0"/><circle cx="37" cy="37" r="28" stroke="#cfe8ff" stroke-width="4" stroke-dasharray="1 2.660"/><path d="M60 15 42 42 32 32Z" fill="#ec3b3b"/><path d="M14 59 32 32 42 42Z" fill="#f4f4f4"/>`) },
  { label: "Chrome", dot: true, art: tile("#fbfbfd", svg`<circle cx="37" cy="37" r="31" fill="#fbc116"/><path d="M10.200 21.500A31 31 0 0 1 63.800 21.500H37L23.500 45Z" fill="#e33b2e"/><path d="M10.200 21.500A31 31 0 0 0 37 68L50.400 45H23.500Z" fill="#24914a"/><circle cx="37" cy="37" r="15.500" fill="#fff"/><circle cx="37" cy="37" r="12" fill="#3478e8"/>`) },
  { label: "Messages", art: tile("url(#gr)", svg`<ellipse cx="37" cy="35" rx="27" ry="22" fill="#e8f8ea"/><path d="M24 52Q24 59 18 61 28 62 34 55Z" fill="#e8f8ea"/>`) },
  { label: "Mail", art: tile("url(#bl)", svg`<rect x="11" y="21" width="52" height="32" rx="4" fill="#f0f2f4"/><path d="M12 23 33 42Q37 45 41 42L62 23M12 51 29 38M62 51 45 38" stroke="#9aa2ac" stroke-width="1.800"/>`) },
  { label: "Maps", art: svg`<clipPath id="mp"><rect width="74" height="74" rx="17"/></clipPath><g clip-path="url(#mp)"><rect width="74" height="74" fill="#f2f0ea"/><path d="M0 0H26L0 20Z M34 0H74V60Z" fill="#58cc60"/><path d="M0 34 20 50V74H0Z" fill="#e69ad0"/><path d="M40 74 50 50 74 74Z" fill="#fcc41c"/><path d="M54 0Q56 24 74 24" stroke="#dfe0e4" stroke-width="9"/><path d="M28 0V34" stroke="#1a7cf4" stroke-width="14"/><circle cx="28" cy="46" r="17" fill="#1a7cf4" stroke="#e8f0fa" stroke-width="3"/><path d="M28 34 37 57 28 52 19 57Z" fill="#fff"/></g>` },
  { label: "Photos", art: tile("#fdfdfd", [[0, "#f99a1c"], [45, "#d8d020"], [90, "#8cc84a"], [135, "#50b890"], [180, "#58a0dc"], [225, "#8a80d0"], [270, "#c880c0"], [315, "#f05a4a"]].map(([a, c]) => petal(a as number, c as string))) },
  { label: "FaceTime", art: tile("url(#gr)", svg`<rect x="11" y="21" width="36" height="32" rx="9" fill="#eefaf0"/><path d="M50 32 62 23V51L50 42Z" fill="#eefaf0"/>`) },
  { label: "Calendar", art: svg`<rect width="74" height="74" rx="17" fill="#fbfbfb"/><path d="M0 23V17A17 17 0 0 1 17 0H57A17 17 0 0 1 74 17V23Z" fill="#f0504c"/><text x="37" y="18" text-anchor="middle" class="oct">OCT</text><text x="37" y="62" text-anchor="middle" class="day">31</text>` },
  { label: "Contacts", art: svg`<path d="M70 12H75V24H70Z" fill="#999"/><path d="M70 26H76V38H70Z" fill="#4ab0e8"/><path d="M70 39H76V51H70Z" fill="#f09020"/><path d="M70 52H76V64H70Z" fill="#50c860"/>${tile("#a8814a", svg`<circle cx="38" cy="37" r="23" stroke="#7f6033" stroke-width="2"/><circle cx="38" cy="32" r="9" fill="#7f6033"/><path d="M22 53Q38 34 54 53 38 66 22 53Z" fill="#7f6033"/>`)}` },
  { label: "Reminders", art: tile("#fcfcfc", ["#1c7cf0", "#ee4444", "#fa9010"].map((c, i) => svg`<circle cx="14" cy=${19 + 18 * i} r="5.500" stroke=${c} stroke-width="1.600"/><circle cx="14" cy=${19 + 18 * i} r="3.600" fill=${c}/><path d=${`M28 ${19 + 18 * i}H66`} stroke="#c8c8cc" stroke-width="2"/>`)) },
  { label: "Notes", art: svg`<rect width="74" height="74" rx="17" fill="#f2f1ec"/><path d="M0 19V17A17 17 0 0 1 17 0H57A17 17 0 0 1 74 17V19Z" fill="#fdc80c"/><path d="M0 22H74" stroke="#c8c4b8" stroke-width="2" stroke-dasharray="2 2"/><path d="M0 37H74M0 55H74" stroke="#d4d2cc" stroke-width="2"/>` },
  { label: "Freeform", art: tile("#fff", svg`<rect x="25" y="10" width="40" height="39" rx="4" fill="#20d0f6"/><circle cx="30" cy="44" r="21" fill="#fb7a48" opacity=".9"/><path d="M13 45C22 24 34 26 29 46 40 20 48 28 44 44 52 38 58 32 67 34" stroke="#0e3a62" stroke-width="4" stroke-linecap="round"/>`) },
  { label: "TV", art: tile("#14201e", svg`<path d="M24 23C24 26 22 28 19 28 19 25 21 23 24 23ZM23 29C26 29 28 30 29 31 25 34 26 39 30 41 29 45 27 48 24 48 22 48 21 47 20 47 18 47 17 48 15 48 12 47 10 42 10 37 10 32 13 29 16 29 18 29 19 30 20 30 21 30 22 29 23 29Z" fill="#fff"/><text x="47" y="48" text-anchor="middle" class="tv">tv</text>`) },
  { label: "Music", art: tile("#fb3c54", svg`<path d="M27 22 53 15V45M27 22V52" stroke="#fff" stroke-width="4.500"/><path d="M27 18 54 12V22L27 28Z" fill="#fff"/><ellipse cx="21" cy="54" rx="8" ry="6.500" fill="#fff"/><ellipse cx="47" cy="48" rx="8" ry="6.500" fill="#fff"/>`) },
  { label: "Podcasts", art: tile("#a042cc", svg`<path d="M24 57A25 25 0 1 1 50 57M27 46A16 16 0 1 1 47 46" stroke="#fff" stroke-width="3.800"/><circle cx="37" cy="32" r="6.500" fill="#fff"/><path d="M30 44Q37 38 44 44L41 64Q37 68 33 64Z" fill="#fff"/>`) },
  { label: "App Store", art: tile("#1c88f4", svg`<path d="M41 15 24 45M33 15 54 52M20 52 17 57M11 45H44M52 45H62M56 55 58 59" stroke="#fff" stroke-width="5.500" stroke-linecap="round"/>`) },
  { label: "Settings", badge: "1", art: tile("#b4b6b4", svg`<circle cx="37" cy="37" r="31" fill="#4a4c4e"/><circle cx="37" cy="37" r="30" stroke="#1c1e20" stroke-width="4" stroke-dasharray="2 2"/><circle cx="37" cy="37" r="23" stroke="#aaa" stroke-width="4"/><circle cx="37" cy="37" r="7" stroke="#aaa" stroke-width="4"/><path d="M44 37H60M33 31 25 17M33 43 25 57" stroke="#aaa" stroke-width="4"/>`) },
  { label: "Slack", dot: true, sep: true, art: tile("#fff", svg`<path d="M31 17H30M17 30H31" stroke="#36c5f0" stroke-width="9" stroke-linecap="round"/><path d="M43 17V30M57 30H56" stroke="#2eb67d" stroke-width="9" stroke-linecap="round"/><path d="M57 43H43M43 56V57" stroke="#ecb22e" stroke-width="9" stroke-linecap="round"/><path d="M30 43V57M17 43H18" stroke="#e01e5a" stroke-width="9" stroke-linecap="round"/>`) },
  { label: "Creative Cloud", dot: true, art: tile("url(#cc)", svg`<path d="M25 56Q11 54 12 38 14 25 27 24 34 15 46 17 61 20 63 36 62 54 47 56Z" stroke="#fff" stroke-width="3.400"/><path d="M37 46C26 53 16 44 20 35 26 27 34 30 39 38L44 45M30 27C38 19 53 24 55 36 54 48 43 49 38 42L33 35" stroke="#fff" stroke-width="4" stroke-linecap="round"/>`) },
  { label: "After Effects", dot: true, art: tile("#060554", svg`<text x="37" y="50" text-anchor="middle" class="ae">Ae</text>`) },
];

@customElement("mac-dock")
class MacDock extends LitElement {
  static styles = [base, css`
    :host { display: flex; justify-content: center; padding-top: 1px; height: 124px; }
    .shelf { display: flex; align-items: flex-start; gap: 20px; height: 114px; padding: 17px 19px 0 16px; background: #2f3fae; border: 1px solid #1d2a86; box-shadow: inset 0 0 0 2px #4d5bc4; border-radius: 32px; }
    .app { position: relative; display: flex; flex-direction: column; width: 74px; gap: 10px; align-items: center; }
    .pic { overflow: visible; }
    .dot { width: 8px; height: 8px; border-radius: 50%; background: #b4c0fa; }
    .sep { width: 2px; height: 84px; background: #6b79d8; margin: -2px 9px 0 10px; }
    .badge { position: absolute; right: -9px; top: -8px; width: 34px; height: 34px; border-radius: 50%; background: #ee3f42; color: #fff; font: 500 20px/34px Inter, sans-serif; text-align: center; }
    .oct { font: 600 15px Inter, sans-serif; fill: #fff; }
    .day { font: 300 39px Inter, sans-serif; fill: #222; }
    .tv { font: 500 29px Inter, sans-serif; fill: #fff; }
    .ae { font: 600 39px "Open Sans", sans-serif; fill: #9c98fc; }
    .twenty { font: 28px Inter, sans-serif; fill: #7448d8; }
  `];
  render() {
    return html`<nav class="shelf">
        ${DOCK.map((d) => html`${d.sep ? html`<span class="sep"></span>` : nothing}<a href="#" class="app" aria-label=${d.label}>${pic(74, 74, svg`<defs>
            <linearGradient id="fi" x2="0" y2="1"><stop stop-color="#1fc4fb"/><stop offset="1" stop-color="#1c6ef2"/></linearGradient>
            <linearGradient id="gr" x2="0" y2="1"><stop stop-color="#5df777"/><stop offset="1" stop-color="#12c031"/></linearGradient>
            <linearGradient id="bl" x2="0" y2="1"><stop stop-color="#1d6df2"/><stop offset="1" stop-color="#1bc2fb"/></linearGradient>
            <linearGradient id="cc" x1="0" y1="1" x2="1" y2="0"><stop stop-color="#7a4cf0"/><stop offset=".3" stop-color="#c060d8"/><stop offset=".6" stop-color="#f8383c"/><stop offset="1" stop-color="#ff5a10"/></linearGradient></defs>${d.art}`)}${d.dot ? html`<span class="dot"></span>` : nothing}${d.badge ? html`<span class="badge">${d.badge}</span>` : nothing}</a>`)}
        <span class="sep"></span>
        <a href="#" class="app" aria-label="Stack">${pic(74, 74, svg`<rect x="4" y="12" width="66" height="42" fill="#e4e4ec"/><rect x="7" y="15" width="60" height="36" fill="#3a3a44"/><rect x="7" y="-6" width="60" height="18" fill="#fff"/><rect x="14" y="-2" width="46" height="80" fill="#f4f4fa"/><rect x="17" y="6" width="40" height="70" fill="#3b18a0"/><path d="M20 12H28M31 12H38M42 12H54" stroke="#e8a060" stroke-width="4"/><text x="37" y="44" text-anchor="middle" class="twenty">20</text><path d="M33 48Q30 30 37 24 44 30 42 48Z" fill="#111"/><circle cx="37" cy="24" r="4" fill="#e8c8b0"/><path d="M20 52H54" stroke="#fff" stroke-width="2"/><path d="M20 60H27M32 60H43M47 60H54" stroke="#f05a30" stroke-width="7"/><path d="M19 71H55" stroke="#c8b8f0" stroke-width="3"/>`)}</a>
        <a href="#" class="app" aria-label="Trash">${pic(74, 74, svg`<path d="M5 6 71 6 63 72Q61 77 50 77H24Q15 77 13 72Z" fill="#7c8084"/><path d="M14 10 20 74H26L22 10ZM48 10 46 76H54L62 10Z" fill="#9a9ea2"/><ellipse cx="38" cy="7" rx="33" ry="7" fill="#5c6064"/><path d="M8 6 14-4 22 0 30-6 38-2 46-6 52 0 62-2 67 7 52 12 37 10 20 13Z" fill="#e8eaec"/><path d="M22 2 28 9 34 3ZM44 0 48 8 56 4Z" fill="#8a9096"/><path d="M36 4 42 10 46 5Z" fill="#d08a3c"/>`)}</a>
      </nav>`;
  }
}

/* ------------------------------------------------------------------ */
@customElement("app-root")
export class AppRoot extends LitElement {
  static styles = [base, css`
    :host { display: flex; flex-direction: column; min-height: 100vh; background: linear-gradient(#2f40c6 0, #2f40c6 50px, #3f4ecb 51px); font: 21px/30px "Open Sans", "Noto Sans", sans-serif; overflow: hidden; }
    .window { position: relative; flex: 1; display: flex; flex-direction: column; background: #171717; border-radius: 18px 18px 20px 20px; overflow: hidden; padding-bottom: 2px; }
    .title { position: relative; display: flex; align-items: center; justify-content: center; height: 39px; background: #cdccd6; border-top: 2px solid #e6e5ee; border-bottom: 1px solid #000; color: #3e3e44; font: 22px/34px Inter, "Liberation Sans", sans-serif; padding-bottom: 2px; }
    .lights { position: absolute; left: 10px; top: 8px; display: flex; gap: 12px; }
    .lights button { width: 18px; height: 18px; border-radius: 50%; background: #fdbc2e; justify-content: center; }
    .lights button:first-child { background: #fb5d57; }
    .lights button:first-child::after { content: ""; width: 6px; height: 6px; border-radius: 50%; background: #6e0a06; }
    .lights button:last-child { background: #29c73f; }
    .panels { flex: 1; display: grid; grid-template-columns: 642px 1fr 600px; gap: 8px; padding: 4px 2px 8px 0; }
    .callout { position: absolute; left: 1688px; top: 106px; width: 716px; height: 348px; padding: 60px 58px; background: #1473e6; border-radius: 8px; color: #fff; }
    .callout::before { content: ""; position: absolute; left: 343px; top: -16px; border: 16px solid transparent; border-top: 0; border-bottom-color: #1473e6; }
    .callout h2 { margin: 0 0 38px; font-size: 24px; line-height: 32px; font-weight: 700; }
    .callout p { margin: 0; max-width: 590px; }
    .ok { display: flex; justify-content: center; border: 4px solid #fff; border-radius: 32px; font-weight: 700; margin-left: auto; }
    .callout .ok { width: 144px; height: 64px; margin-top: 34px; }
    .alert { position: absolute; left: 50%; top: 838px; width: 988px; transform: translateX(-50%); height: 250px; background: #282828; border-radius: 20px; box-shadow: 0 0 0 1px #4a4a4a, 0 20px 50px rgba(0, 0, 0, 0.5); overflow: hidden; color: #c4c4c4; }
    .alert h2 { margin: 0; height: 57px; background: #e7e7ec; border-bottom: 2px solid #000; color: #a9a8ac; text-align: center; font: 700 27px/54px Inter, sans-serif; }
    .msg { display: flex; gap: 42px; padding: 30px 30px 0 32px; }
    .msg p { margin: 0; }
    .alert .ok { width: 160px; height: 40px; margin-right: 30px; margin-top: 33px; color: #f0f0f0; border: 3px solid #f0f0f0; }
    .msg text { font: 600 18px "Open Sans", sans-serif; }
  `];
  render() {
    return html`<mac-menubar></mac-menubar>
      <main class="window">
        <header class="title"><span class="lights"><button aria-label="Close"></button><button aria-label="Minimise"></button><button aria-label="Zoom"></button></span>SAFE MODE - Adobe After Effects 2024 - Touchbase_dooh(Changes)2_1 (converted) *</header>
        <ae-toolbar></ae-toolbar>
        <div class="panels"><ae-project></ae-project><ae-viewer></ae-viewer><ae-side></ae-side></div>
        <ae-timeline></ae-timeline>
        <section class="callout">
          <h2>Review workspace</h2>
          <p>The Review workspace includes the Frame.io panel which<br />allows you to share your work with collaborators.</p>
          <button class="ok">OK</button>
        </section>
        <section class="alert" role="dialog" aria-label="After Effects">
          <h2>After Effects</h2>
          <div class="msg">${pic(60, 60, svg`<path d="M27 2Q30-2 33 2L59 56Q60 60 56 60H4Q0 60 1 56Z" fill="#f43b3b"/><path d="M30 16V39M30 45V52" stroke="#282828" stroke-width="8"/><rect x="33" y="35" width="27" height="26" rx="5" fill="#060554"/><text x="46" y="54" text-anchor="middle" fill="#a8a4fc">Ae</text>`)}
            <p>After Effects error: File exists but couldn't be open for reading: “/Users/macbook/<br />Documents/Touchbase/Touchbase_DOOH/map.png”. ( 3 :: 0 )</p></div>
          <button class="ok">OK</button>
        </section>
      </main>
      <mac-dock></mac-dock>`;
  }
}
